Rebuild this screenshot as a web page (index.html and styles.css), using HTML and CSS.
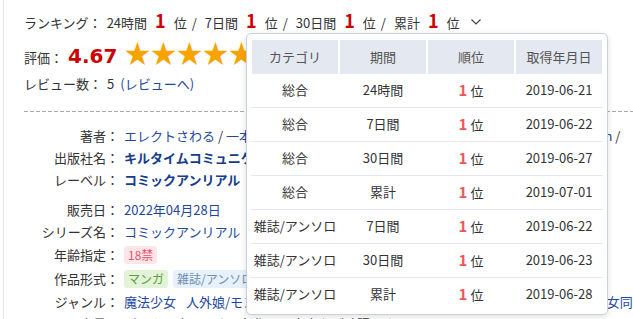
FILE: index.html
```html
<!DOCTYPE html>
<html lang="ja">
<head>
    <meta charset="UTF-8">
    <meta name="viewport" content="width=device-width, initial-scale=1.0">
    <title>作品詳細</title>
    <link rel="stylesheet" href="styles.css">
</head>
<body>
    <div class="page">
        <!-- Ranking -->
        <div class="rank">
            <span class="rank-label">ランキング：</span>
            <span>24時間</span><b class="num">1</b><span>位</span><span class="sep">/</span>
            <span>7日間</span><b class="num">1</b><span>位</span><span class="sep">/</span>
            <span>30日間</span><b class="num">1</b><span>位</span><span class="sep">/</span>
            <span>累計</span><b class="num">1</b><span>位</span>
            <svg class="chevron" width="10" height="6" viewBox="0 0 10 6"><path d="M0.5 0.5 L5 5 L9.5 0.5" fill="none" stroke="#444" stroke-width="1.2"/></svg>

            <div class="rank-popup">
                <div class="popup-head">
                    <div>カテゴリ</div>
                    <div>期間</div>
                    <div>順位</div>
                    <div>取得年月日</div>
                </div>
                <div class="popup-row"><div>総合</div><div>24時間</div><div><b>1</b>位</div><div>2019-06-21</div></div>
                <div class="popup-row"><div>総合</div><div>7日間</div><div><b>1</b>位</div><div>2019-06-22</div></div>
                <div class="popup-row"><div>総合</div><div>30日間</div><div><b>1</b>位</div><div>2019-06-27</div></div>
                <div class="popup-row"><div>総合</div><div>累計</div><div><b>1</b>位</div><div>2019-07-01</div></div>
                <div class="popup-row"><div>雑誌/アンソロ</div><div>7日間</div><div><b>1</b>位</div><div>2019-06-22</div></div>
                <div class="popup-row"><div>雑誌/アンソロ</div><div>30日間</div><div><b>1</b>位</div><div>2019-06-23</div></div>
                <div class="popup-row"><div>雑誌/アンソロ</div><div>累計</div><div><b>1</b>位</div><div>2019-06-28</div></div>
            </div>
        </div>

        <!-- Rating -->
        <div class="rating">
            <span>評価：</span>
            <span class="score">4.67</span>
            <span class="stars">★★★★★</span>
        </div>

        <div class="reviews">
            <span>レビュー数：</span>
            <span class="count">5</span>
            <a class="link" href="#">(レビューへ)</a>
        </div>

        <div class="divider"></div>

        <!-- Details -->
        <div class="details">
            <div class="dt">著者：</div>
            <div class="dd"><a class="link" href="#">エレクトさわる</a> / <a class="link" href="#">一本杭</a> / <a class="link" href="#">緑木邑</a> / <a class="link" href="#">鬼ノ仁</a> / <a class="link" href="#">宮元一佐</a> / <a class="link" href="#">草野ゆぅ</a> / <a class="link" href="#">Aran</a> / <a class="link" href="#">蒼井</a> / <a class="link" href="#">Shion</a> /</div>

            <div class="dt">出版社名：</div>
            <div class="dd"><a class="link bold" href="#">キルタイムコミュニケーション</a></div>

            <div class="dt">レーベル：</div>
            <div class="dd"><a class="link bold" href="#">コミックアンリアル</a></div>

            <div class="dt gap">販売日：</div>
            <div class="dd gap"><a class="link" href="#">2022年04月28日</a></div>

            <div class="dt">シリーズ名：</div>
            <div class="dd"><a class="link" href="#">コミックアンリアル</a></div>

            <div class="dt tall">年齢指定：</div>
            <div class="dd tall"><span class="tag tag-adult">18禁</span></div>

            <div class="dt tall">作品形式：</div>
            <div class="dd tall"><span class="tag tag-manga">マンガ</span><span class="tag tag-mag">雑誌/アンソロ</span></div>

            <div class="dt">ジャンル：</div>
            <div class="dd genres"><a class="link" href="#">魔法少女</a><a class="link" href="#">人外娘/モンスター娘</a><a class="link" href="#">巨乳/爆乳</a><a class="link" href="#">中出し</a><a class="link" href="#">アヘ顔</a><a class="link" href="#">ファンタジー</a><a class="link" href="#">触手</a><a class="link" href="#">女同士</a></div>

            <div class="dt">ファイル容量：</div>
            <div class="dd">パック販売につき、各作品の内容をご確認下さい</div>
        </div>
    </div>
</body>
</html>
```

FILE: styles.css
```css
body {
    margin: 0;
    background: #fff;
    color: #333;
    font-family: "Noto Sans CJK JP", sans-serif;
    font-size: 13px;
    overflow: hidden;
}
.page {
    margin-left: 3px;
    border-left: 1px solid #e6e6e6;
    padding: 7px 0 0 20px;
    min-height: 330px;
}
.link {
    color: #1d48a3;
    text-decoration: none;
}
.link.bold {
    font-weight: bold;
    color: #143c8e;
}

/* ranking line */
.rank {
    position: relative;
    display: flex;
    align-items: baseline;
    height: 26px;
    line-height: 26px;
    white-space: nowrap;
}
.rank-label {
    margin-right: 5px;
}
.num {
    color: #cc0000;
    font-size: 18px;
    margin: 0 8px;
}
.sep {
    margin: 0 8px 0 5px;
}
.chevron {
    margin-left: 11px;
    align-self: center;
    margin-top: 4px;
}

/* popup */
.rank-popup {
    position: absolute;
    left: 222px;
    top: 26px;
    width: 362px;
    box-sizing: border-box;
    padding: 6px 5px 3px;
    background: #fff;
    border: 1px solid #c9d0de;
    border-radius: 5px;
    box-shadow: 0 2px 6px rgba(0, 0, 0, 0.12);
    line-height: 32px;
    z-index: 2;
}
.popup-head,
.popup-row {
    display: grid;
    grid-template-columns: repeat(4, 86px);
    column-gap: 2px;
    text-align: center;
}
.popup-head div {
    background: #e4e8f0;
    color: #555;
    height: 34px;
    line-height: 34px;
}
.popup-row {
    border-bottom: 1px solid #e3e7ef;
    margin: 0 -1px;
    padding: 0 1px;
}
.popup-row:last-child {
    border-bottom: none;
}
.popup-row b {
    color: #f05656;
    font-size: 15px;
    margin-right: 3px;
}

/* rating */
.rating {
    display: flex;
    align-items: baseline;
    margin-top: 3px;
    height: 32px;
    line-height: 32px;
}
.score {
    font-family: "DejaVu Sans", sans-serif;
    font-weight: bold;
    font-size: 20px;
    color: #cc0000;
    margin-left: 5px;
}
.stars {
    font-size: 26px;
    color: #f8a300;
    margin-left: 7px;
    letter-spacing: 0;
}
.reviews {
    display: flex;
    align-items: baseline;
    margin-top: 5px;
    line-height: 22px;
}
.count {
    margin-left: 5px;
}
.reviews .link {
    margin-left: 6px;
}
.divider {
    margin-top: 16px;
    height: 1px;
    background: repeating-linear-gradient(90deg, #aaa 0 4px, transparent 4px 6px);
}

/* details */
.details {
    display: grid;
    grid-template-columns: 95px 1fr;
    column-gap: 5px;
    margin-top: 13px;
    line-height: 22px;
}
.dt {
    text-align: right;
    white-space: nowrap;
}
.dd {
    white-space: nowrap;
}
.gap {
    margin-top: 8px;
}
.tall {
    height: 24px;
    display: flex;
    align-items: center;
}
.dt.tall {
    justify-content: flex-end;
}
.tag {
    display: inline-block;
    height: 18px;
    line-height: 18px;
    padding: 0 4px;
    border-radius: 3px;
    font-size: 12px;
    margin-right: 5px;
}
.tag-adult {
    background: #fde6ea;
    color: #e8526a;
}
.tag-manga {
    background: #e2f3d8;
    color: #5f9e3e;
}
.tag-mag {
    background: #e7f1fb;
    color: #6e8fb3;
}
.genres .link {
    margin-right: 10px;
}
```
